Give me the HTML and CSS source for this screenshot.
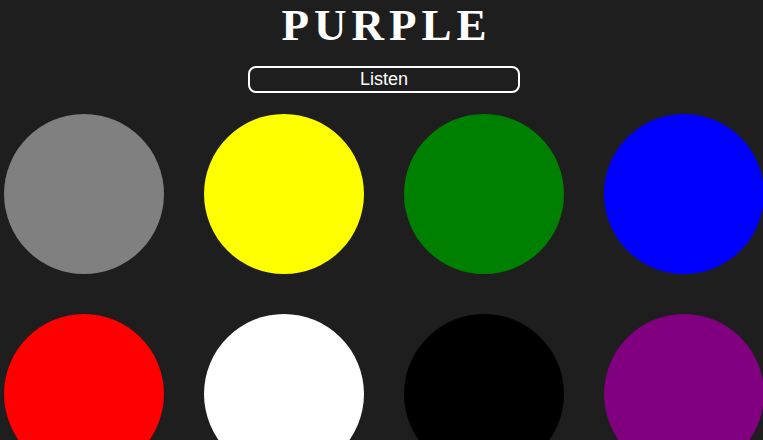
FILE: index.html
```html
<!DOCTYPE html>
<html>
<head>
<meta charset="utf-8">
<link rel="stylesheet" href="styles.css">
</head>
<body>
<header class="header">
  <h1 class="title">PURPLE</h1>
  <button class="listen">Listen</button>
</header>
<main class="grid">
  <div class="circle gray"></div>
  <div class="circle yellow"></div>
  <div class="circle green"></div>
  <div class="circle blue"></div>
  <div class="circle red"></div>
  <div class="circle white"></div>
  <div class="circle black"></div>
  <div class="circle purple"></div>
</main>
</body>
</html>
```
FILE: styles.css
```css
html, body {
  margin: 0;
  padding: 0;
  background: #1e1e1e;
  overflow: hidden;
}
.header {
  display: flex;
  flex-direction: column;
  align-items: center;
  padding-left: 5px;
}
.title {
  margin: 0;
  font-family: "Liberation Serif", serif;
  font-weight: bold;
  font-size: 45px;
  line-height: 50px;
  letter-spacing: 5px;
  padding-left: 5px;
  color: #fff;
}
.listen {
  margin-top: 16px;
  width: 272px;
  height: 27px;
  background: transparent;
  border: 2px solid #fff;
  border-radius: 8px;
  color: #fff;
  font-family: "Liberation Sans", Arial, sans-serif;
  font-size: 18px;
  padding: 0;
  line-height: 23px;
}
.grid {
  display: grid;
  grid-template-columns: repeat(4, 160px);
  column-gap: 40px;
  row-gap: 40px;
  padding-left: 4px;
  margin-top: 21px;
}
.circle {
  width: 160px;
  height: 160px;
  border-radius: 50%;
}
.gray { background: #808080; }
.yellow { background: #ffff00; }
.green { background: #008000; }
.blue { background: #0000ff; }
.red { background: #ff0000; }
.white { background: #ffffff; }
.black { background: #000000; }
.purple { background: #800080; }
```
